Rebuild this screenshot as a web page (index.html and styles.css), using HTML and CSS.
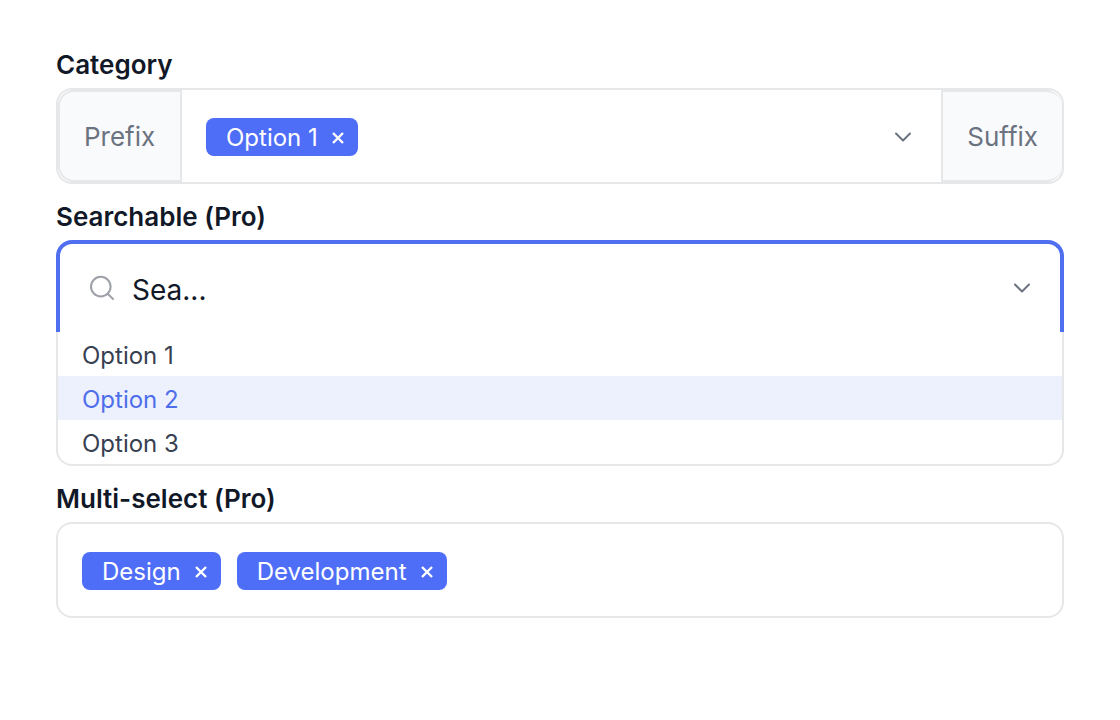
FILE: index.html
```html
<!DOCTYPE html>
<html lang="en">
<head>
    <meta charset="UTF-8">
    <meta name="viewport" content="width=device-width, initial-scale=1.0">
    <title>Select Fields</title>
    <link rel="stylesheet" href="styles.css">
</head>
<body>
    <form class="container">
        <div class="form-group">
            <label for="category">Category</label>
            <div class="select-box has-addons">
                <span class="addon prefix">Prefix</span>
                <div class="select-value">
                    <span class="tag">Option 1
                        <button type="button" class="remove" aria-label="Remove Option 1">
                            <svg viewBox="0 0 12 12"><path d="M1 1l10 10M11 1L1 11"/></svg>
                        </button>
                    </span>
                    <input type="text" id="category" name="category">
                    <button type="button" class="toggle" aria-label="Show categories">
                        <svg viewBox="0 0 20 12"><path d="M3 2.5l7 7 7-7"/></svg>
                    </button>
                </div>
                <span class="addon suffix">Suffix</span>
            </div>
        </div>

        <div class="form-group">
            <label for="search">Searchable (Pro)</label>
            <div class="search-box">
                <svg class="search-icon" viewBox="0 0 28 28"><circle cx="12.8" cy="12.6" r="9.8"/><path d="M20 20l5 5"/></svg>
                <input type="text" id="search" name="search" value="Sea...">
                <button type="button" class="toggle" aria-label="Show options">
                    <svg viewBox="0 0 20 12"><path d="M3 2.5l7 7 7-7"/></svg>
                </button>
            </div>
            <div class="options">
                <button type="button" class="option">Option 1</button>
                <button type="button" class="option active">Option 2</button>
                <button type="button" class="option">Option 3</button>
            </div>
        </div>

        <div class="form-group">
            <label for="multi">Multi-select (Pro)</label>
            <div class="select-box">
                <div class="select-value">
                    <span class="tag">Design
                        <button type="button" class="remove" aria-label="Remove Design">
                            <svg viewBox="0 0 12 12"><path d="M1 1l10 10M11 1L1 11"/></svg>
                        </button>
                    </span>
                    <span class="tag">Development
                        <button type="button" class="remove" aria-label="Remove Development">
                            <svg viewBox="0 0 12 12"><path d="M1 1l10 10M11 1L1 11"/></svg>
                        </button>
                    </span>
                    <input type="text" id="multi" name="multi">
                </div>
            </div>
        </div>
    </form>
</body>
</html>
```
FILE: styles.css
```css
* {
    box-sizing: border-box;
}
body {
    margin: 0;
    padding: 48px 56px;
    background-color: #fff;
    color: #111827;
    font-family: Inter, sans-serif;
}
.form-group {
    margin-bottom: 16px;
}
label {
    display: block;
    margin-bottom: 6px;
    font-size: 26px;
    font-weight: 600;
    line-height: 34px;
}
input,
button {
    padding: 0;
    border: none;
    background: none;
    color: inherit;
    font-family: inherit;
    outline: none;
}
input {
    flex: 1;
    min-width: 0;
    font-size: 28px;
}
button {
    cursor: pointer;
}
svg {
    display: block;
    fill: none;
    stroke: currentColor;
    stroke-width: 2;
    stroke-linecap: round;
    stroke-linejoin: round;
}

/* Select boxes */
.select-box {
    display: flex;
    min-height: 96px;
    border: 2px solid #e5e7e8;
    border-radius: 16px;
}
.select-value {
    display: flex;
    flex: 1;
    align-items: center;
    gap: 16px;
    min-width: 0;
    padding: 2px 28px 0 24px;
}
.addon {
    display: flex;
    align-items: center;
    padding: 0 24px;
    border: 2px solid #e5e7e8;
    background-color: #f9fafc;
    color: #6b7280;
    font-size: 26px;
}
.prefix {
    min-width: 124px;
    border-radius: 16px 0 0 16px;
}
.suffix {
    border-right: none;
    border-radius: 0 16px 16px 0;
}

/* Tags */
.tag {
    display: flex;
    align-items: center;
    gap: 14px;
    height: 38px;
    padding: 0 14px 0 20px;
    border-radius: 8px;
    background-color: #4f6ef7;
    color: #fff;
    font-size: 24px;
    white-space: nowrap;
}
.remove svg {
    width: 12px;
    height: 12px;
    margin-top: 2px;
    stroke-width: 2.4;
    stroke-linecap: butt;
}
.toggle {
    color: #6b7280;
}
.toggle svg {
    width: 20px;
    height: 12px;
}

/* Search box and its option list */
.search-box {
    display: flex;
    align-items: center;
    height: 92px;
    padding: 0 28px;
    border: 4px solid #4f6ff0;
    border-bottom: none;
    border-radius: 16px 16px 0 0;
}
.search-box input {
    padding-top: 4px;
}
.search-icon {
    width: 28px;
    height: 28px;
    margin-right: 16px;
    color: #9ea1a8;
}
.options {
    border: 2px solid #e5e7e8;
    border-top: none;
    border-radius: 0 0 16px 16px;
    overflow: hidden;
}
.option {
    display: block;
    width: 100%;
    height: 44px;
    padding: 2px 24px 0;
    color: #374151;
    font-size: 24px;
    text-align: left;
}
.option.active {
    background-color: #edf1fe;
    color: #4f6eea;
}
```
